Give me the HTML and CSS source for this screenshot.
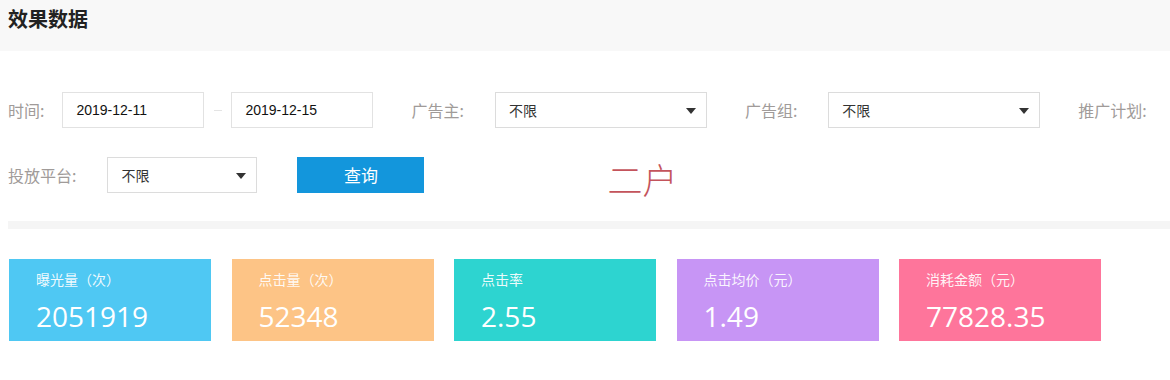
FILE: index.html
```html
<!DOCTYPE html>
<html lang="zh-CN">
<head>
    <meta charset="UTF-8">
    <title>效果数据</title>
    <link rel="stylesheet" href="styles.css">
</head>
<body>

<div class="page-header">
    <h2>效果数据</h2>
</div>

<!-- 筛选条件 -->
<form class="filter" action="#">
    <div class="filter-row">
        <label class="label label-short">时间:</label>
        <input class="date-input" type="text" value="2019-12-11">
        <span class="dash"></span>
        <input class="date-input" type="text" value="2019-12-15">

        <label class="label label-gap">广告主:</label>
        <div class="select select-wide">不限<span class="arrow"></span></div>

        <label class="label label-gap">广告组:</label>
        <div class="select select-wide">不限<span class="arrow"></span></div>

        <label class="label label-gap">推广计划:</label>
    </div>
    <div class="filter-row">
        <label class="label">投放平台:</label>
        <div class="select select-small">不限<span class="arrow"></span></div>
        <button type="submit" class="btn-search">查询</button>
        <span class="stamp">二户</span>
    </div>
</form>

<div class="divider"></div>

<!-- 数据卡片 -->
<div class="cards">
    <div class="card card-blue">
        <p class="card-title">曝光量（次）</p>
        <p class="card-value">2051919</p>
    </div>
    <div class="card card-orange">
        <p class="card-title">点击量（次）</p>
        <p class="card-value">52348</p>
    </div>
    <div class="card card-teal">
        <p class="card-title">点击率</p>
        <p class="card-value">2.55</p>
    </div>
    <div class="card card-purple">
        <p class="card-title">点击均价（元）</p>
        <p class="card-value">1.49</p>
    </div>
    <div class="card card-pink">
        <p class="card-title">消耗金额（元）</p>
        <p class="card-value">77828.35</p>
    </div>
</div>

</body>
</html>
```

FILE: styles.css
```css
body {
    margin: 0;
    padding: 0;
    background-color: #fff;
    font-family: "Noto Sans CJK SC", "Liberation Sans", sans-serif;
    color: #333;
    overflow: hidden;
}
.page-header {
    height: 51px;
    background-color: #f8f8f8;
    padding: 7px 0 0 8px;
    box-sizing: border-box;
}
.page-header h2 {
    margin: 0;
    font-size: 20px;
    line-height: 24px;
    font-weight: 700;
    color: #222;
}

.filter {
    padding: 41px 0 28px 8px;
}
.filter-row {
    display: flex;
    align-items: center;
    height: 36px;
    white-space: nowrap;
}
.filter-row > * {
    flex-shrink: 0;
}
.filter-row + .filter-row {
    margin-top: 29px;
}
.label {
    font-size: 16px;
    color: #a09b99;
    margin-right: 31px;
}
.label-short {
    margin-right: 18px;
}
.label-gap {
    margin-left: 38px;
}
.date-input {
    width: 142px;
    height: 36px;
    box-sizing: border-box;
    border: 1px solid #e2e2e2;
    padding: 0 13px;
    font-family: "Liberation Sans", sans-serif;
    font-size: 14px;
    color: #111;
    outline: none;
}
.dash {
    width: 8px;
    height: 1px;
    margin: 0 9px 0 10px;
    background-color: #e4e4e4;
}
.select {
    position: relative;
    height: 36px;
    box-sizing: border-box;
    border: 1px solid #dcdcdc;
    padding-left: 13px;
    font-size: 14px;
    line-height: 34px;
    color: #333;
}
.select-wide {
    width: 212px;
}
.select-small {
    width: 150px;
}
.arrow {
    position: absolute;
    right: 10px;
    top: 15px;
    width: 0;
    height: 0;
    border-left: 5px solid transparent;
    border-right: 5px solid transparent;
    border-top: 6px solid #333;
}
.btn-search {
    width: 127px;
    height: 36px;
    margin-left: 40px;
    margin-top: -1px;
    border: none;
    background-color: #1396dc;
    color: #fff;
    font-family: "Noto Sans CJK SC", sans-serif;
    font-size: 17px;
    cursor: pointer;
}
.stamp {
    margin-left: 183px;
    margin-top: 6px;
    font-size: 35px;
    font-weight: 300;
    color: #c4545c;
}

.divider {
    height: 8px;
    margin-left: 8px;
    background-color: #f5f5f5;
}

.cards {
    display: flex;
    gap: 20.5px;
    padding: 30px 0 0 9px;
}
.card {
    width: 202px;
    height: 82px;
    box-sizing: border-box;
    padding: 10px 0 0 27px;
    color: #fff;
}
.card-title {
    margin: 0;
    font-size: 14px;
    line-height: 20px;
    color: rgba(255, 255, 255, 0.92);
}
.card-value {
    margin: 9px 0 0 0;
    font-family: "Open Sans", sans-serif;
    font-size: 28px;
    line-height: 36px;
}
.card-blue { background-color: #4fc8f3; }
.card-orange { background-color: #fdc486; }
.card-teal { background-color: #2dd4d0; }
.card-purple { background-color: #c795f5; }
.card-pink { background-color: #fe759b; }
```
